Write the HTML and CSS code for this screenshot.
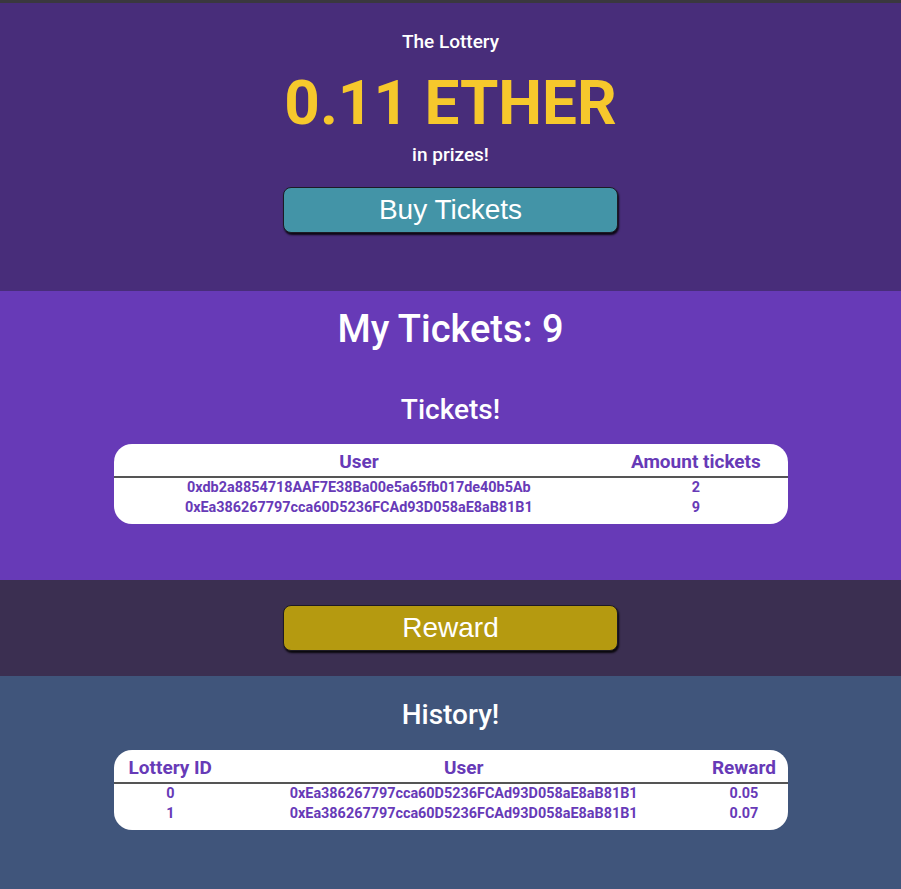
FILE: index.html
```html
<!DOCTYPE html>
<html>
<head>
<meta charset="utf-8">
<title>The Lottery</title>
<link rel="stylesheet" href="styles.css">
</head>
<body>
<div class="topbar"></div>
<header class="hero">
  <div class="hero-title">The Lottery</div>
  <div class="hero-amount">0.11 ETHER</div>
  <div class="hero-sub">in prizes!</div>
  <button class="btn btn-buy">Buy Tickets</button>
</header>
<section class="tickets">
  <h1 class="my-tickets">My Tickets: 9</h1>
  <h2 class="section-title">Tickets!</h2>
  <div class="card">
    <table class="data">
      <thead>
        <tr><th>User</th><th>Amount tickets</th></tr>
      </thead>
      <tbody>
        <tr><td>0xdb2a8854718AAF7E38Ba00e5a65fb017de40b5Ab</td><td>2</td></tr>
        <tr><td>0xEa386267797cca60D5236FCAd93D058aE8aB81B1</td><td>9</td></tr>
      </tbody>
    </table>
  </div>
</section>
<section class="reward">
  <button class="btn btn-reward">Reward</button>
</section>
<section class="history">
  <h2 class="section-title history-title">History!</h2>
  <div class="card">
    <table class="data">
      <thead>
        <tr><th>Lottery ID</th><th>User</th><th>Reward</th></tr>
      </thead>
      <tbody>
        <tr><td>0</td><td>0xEa386267797cca60D5236FCAd93D058aE8aB81B1</td><td>0.05</td></tr>
        <tr><td>1</td><td>0xEa386267797cca60D5236FCAd93D058aE8aB81B1</td><td>0.07</td></tr>
      </tbody>
    </table>
  </div>
</section>
</body>
</html>
```

FILE: styles.css
```css
html, body {
  margin: 0;
  padding: 0;
}
body {
  font-family: Roboto, "Noto Sans", sans-serif;
  background: #40557b;
  color: #fff;
  overflow: hidden;
}
.topbar {
  height: 3px;
  background: #3a383f;
}
.hero {
  background: #482d7a;
  text-align: center;
  padding: 27px 0 58px;
}
.hero-title {
  font-size: 19px;
  font-weight: 500;
  line-height: 24px;
}
.hero-amount {
  margin-top: 11px;
  font-size: 62px;
  font-weight: 700;
  line-height: 76px;
  color: #f6c82c;
}
.hero-sub {
  margin-top: 4px;
  font-size: 19px;
  font-weight: 500;
  line-height: 20px;
}
.btn {
  display: block;
  margin: 0 auto;
  width: 335px;
  height: 46px;
  border: 1px solid #1d1a24;
  border-radius: 8px;
  box-shadow: 1px 2px 2px rgba(0, 0, 0, 0.85);
  font-family: "Liberation Sans", Arial, sans-serif;
  font-size: 28px;
  color: #fff;
  padding: 0;
  cursor: pointer;
}
.btn-buy {
  margin-top: 22px;
  background: #4394a7;
}
.btn-reward {
  background: #b59a10;
}
.tickets {
  background: #673ab7;
  padding: 16px 0 56px;
  text-align: center;
}
.my-tickets {
  margin: 0;
  font-size: 38px;
  font-weight: 500;
  line-height: 44px;
}
.section-title {
  margin: 0;
  font-size: 28px;
  font-weight: 500;
  line-height: 34px;
}
.tickets .section-title {
  margin-top: 42px;
}
.card {
  width: 674px;
  margin: 17px auto 0;
  background: #fff;
  border-radius: 18px;
  padding: 6px 0;
  box-sizing: border-box;
}
.history .card {
  margin-top: 18px;
}
.data {
  width: 100%;
  border-collapse: collapse;
  color: #673ab7;
  text-align: center;
}
.data th {
  padding: 0 0 2px;
  font-size: 19px;
  font-weight: 700;
  line-height: 24px;
  border-bottom: 2px solid #555;
}
.data td {
  padding: 0;
  font-size: 14.4px;
  font-weight: 700;
  line-height: 20px;
}
.reward {
  background: #3b2f51;
  padding: 25px 0;
}
.history {
  background: #40557b;
  padding: 22px 0 60px;
  text-align: center;
}
```
